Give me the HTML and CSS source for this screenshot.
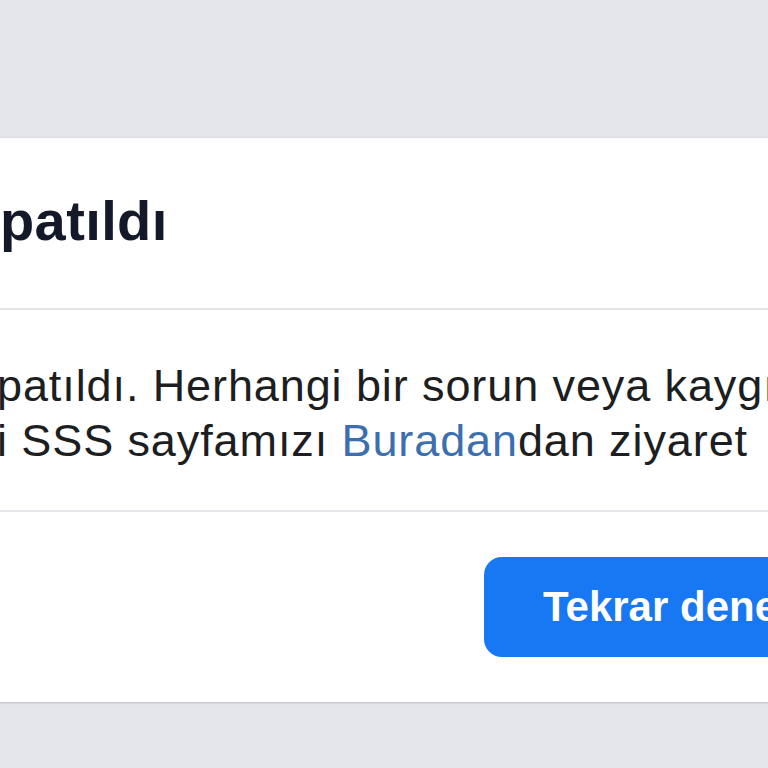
FILE: index.html
```html
<!DOCTYPE html>
<html lang="tr">
<head>
<meta charset="utf-8">
<link rel="stylesheet" href="styles.css">
</head>
<body>
<div class="page">
  <div class="card">
    <div class="header">
      <h1 class="title">patıldı</h1>
    </div>
    <div class="content">
      <p class="msg">patıldı. Herhangi bir sorun veya kaygı<br>i SSS sayfamızı <a class="link" href="#">Buradan</a>dan ziyaret</p>
    </div>
    <div class="footer">
      <button class="btn">Tekrar dene</button>
    </div>
  </div>
</div>
</body>
</html>
```
FILE: styles.css
```css
html, body {
  margin: 0;
  padding: 0;
  background: #e4e6eb;
  overflow: hidden;
}
.page {
  padding-top: 138px;
  width: 768px;
  height: 768px;
  box-sizing: border-box;
}
.card {
  background: #ffffff;
  margin-left: -20px;
  margin-right: -20px;
  box-shadow: 0 1px 2px rgba(0,0,0,0.18), 0 -1px 2px rgba(0,0,0,0.04);
  font-family: "Liberation Sans", Arial, sans-serif;
  overflow: hidden;
}
.header {
  height: 170px;
  border-bottom: 2px solid #e4e6ea;
  display: flex;
  align-items: center;
  padding-left: 20px;
}
.title {
  margin: 0;
  font-size: 56px;
  font-weight: bold;
  color: #14192a;
  line-height: 1;
  padding-bottom: 4px;
  letter-spacing: 0.4px;
  white-space: nowrap;
}
.content {
  height: 202px;
  border-bottom: 2px solid #e4e6ea;
  box-sizing: border-box;
  padding-left: 17px;
  padding-top: 48px;
}
.msg {
  margin: 0;
  font-size: 45px;
  line-height: 55px;
  letter-spacing: 0.9px;
  color: #1c1e21;
  white-space: nowrap;
}
.link {
  color: #3b6fb0;
  text-decoration: none;
}
.footer {
  height: 190px;
  box-sizing: border-box;
  padding-top: 45px;
  padding-left: 504px;
}
.btn {
  height: 100px;
  border: none;
  border-radius: 18px;
  background: #1877f2;
  color: #ffffff;
  font-family: "Liberation Sans", Arial, sans-serif;
  font-weight: bold;
  font-size: 42px;
  padding: 0 59px;
  white-space: nowrap;
}
```
